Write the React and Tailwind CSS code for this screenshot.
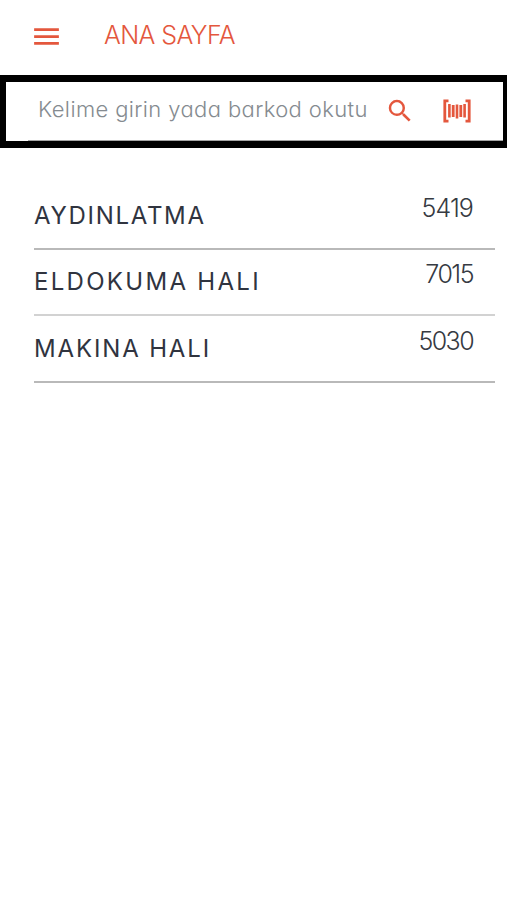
import { MdMenu, MdSearch } from "react-icons/md";
import clsx from "clsx";

const categories = [
  { name: "AYDINLATMA", count: 5419, nameClass: "mt-[17px] tracking-[1.7px]", countClass: "mt-[9px] tracking-[-0.9px]", line: "border-[#b9b9b9]" },
  { name: "ELDOKUMA HALI", count: 7015, nameClass: "mt-4 tracking-[2.3px]", countClass: "mt-2 tracking-[-1.5px]", line: "border-[#d2d2d2]" },
  { name: "MAKINA HALI", count: 5030, nameClass: "mt-[17px] tracking-[1.85px]", countClass: "mt-[9px] tracking-[-1.6px]", line: "border-[#b9b9b9]" },
];

function BarcodeIcon({ className }) {
  return (
    <svg viewBox="0 0 28 24" fill="none" stroke="currentColor" className={className}>
      <path d="M5.5 1.8H1.8V22.2H5.5M22.5 1.8H26.2V22.2H22.5" strokeWidth="2.8" />
      <path d="M6.4 5V18.5M14 5.5V19.5M21.6 5V18.5" strokeWidth="2.6" />
      <path d="M10.2 6V18M17.8 6V18" strokeWidth="2.8" />
    </svg>
  );
}

export default function App() {
  return (
    <div className="min-h-screen w-full bg-white font-['Inter',sans-serif] [font-feature-settings:'cv11']">
      <header className="flex h-[75px] items-start pl-[30px] pt-5 text-[#e4573d]">
        <MdMenu className="h-[33px] w-[33px]" />
        <h1 className="ml-[41px] whitespace-nowrap text-[25px] font-light leading-[31px] tracking-[-0.6px]">
          ANA SAYFA
        </h1>
      </header>

      <div className="h-[73px] border-y-[7px] border-l-[6px] border-r-[4px] border-black">
        <div className="ml-[22px] flex h-full items-start border-b border-[#a5a5a5]">
          <div className="ml-2.5 mt-[11px] w-[347px] whitespace-nowrap text-[22px] font-light leading-8 tracking-[0.38px] text-[#858b90]">
            Kelime girin yada barkod okutu
          </div>
          <MdSearch className="mt-3.5 h-[30px] w-[30px] shrink-0 text-[#e4573d]" />
          <BarcodeIcon className="ml-7 mt-[17px] h-6 w-7 shrink-0 text-[#e4573d]" />
        </div>
      </div>

      <ul className="ml-[34px] mr-3 mt-[35px]">
        {categories.map((item) => (
          <li
            key={item.name}
            className={clsx("flex h-[66.5px] items-start justify-between border-b-2 pr-[22px]", item.line)}
          >
            <span className={clsx("whitespace-nowrap text-[24px] leading-8 text-[#30343f]", item.nameClass)}>
              {item.name}
            </span>
            <span className={clsx("text-[25px] font-light leading-8 text-[#363a42]", item.countClass)}>
              {item.count}
            </span>
          </li>
        ))}
      </ul>
    </div>
  );
}
